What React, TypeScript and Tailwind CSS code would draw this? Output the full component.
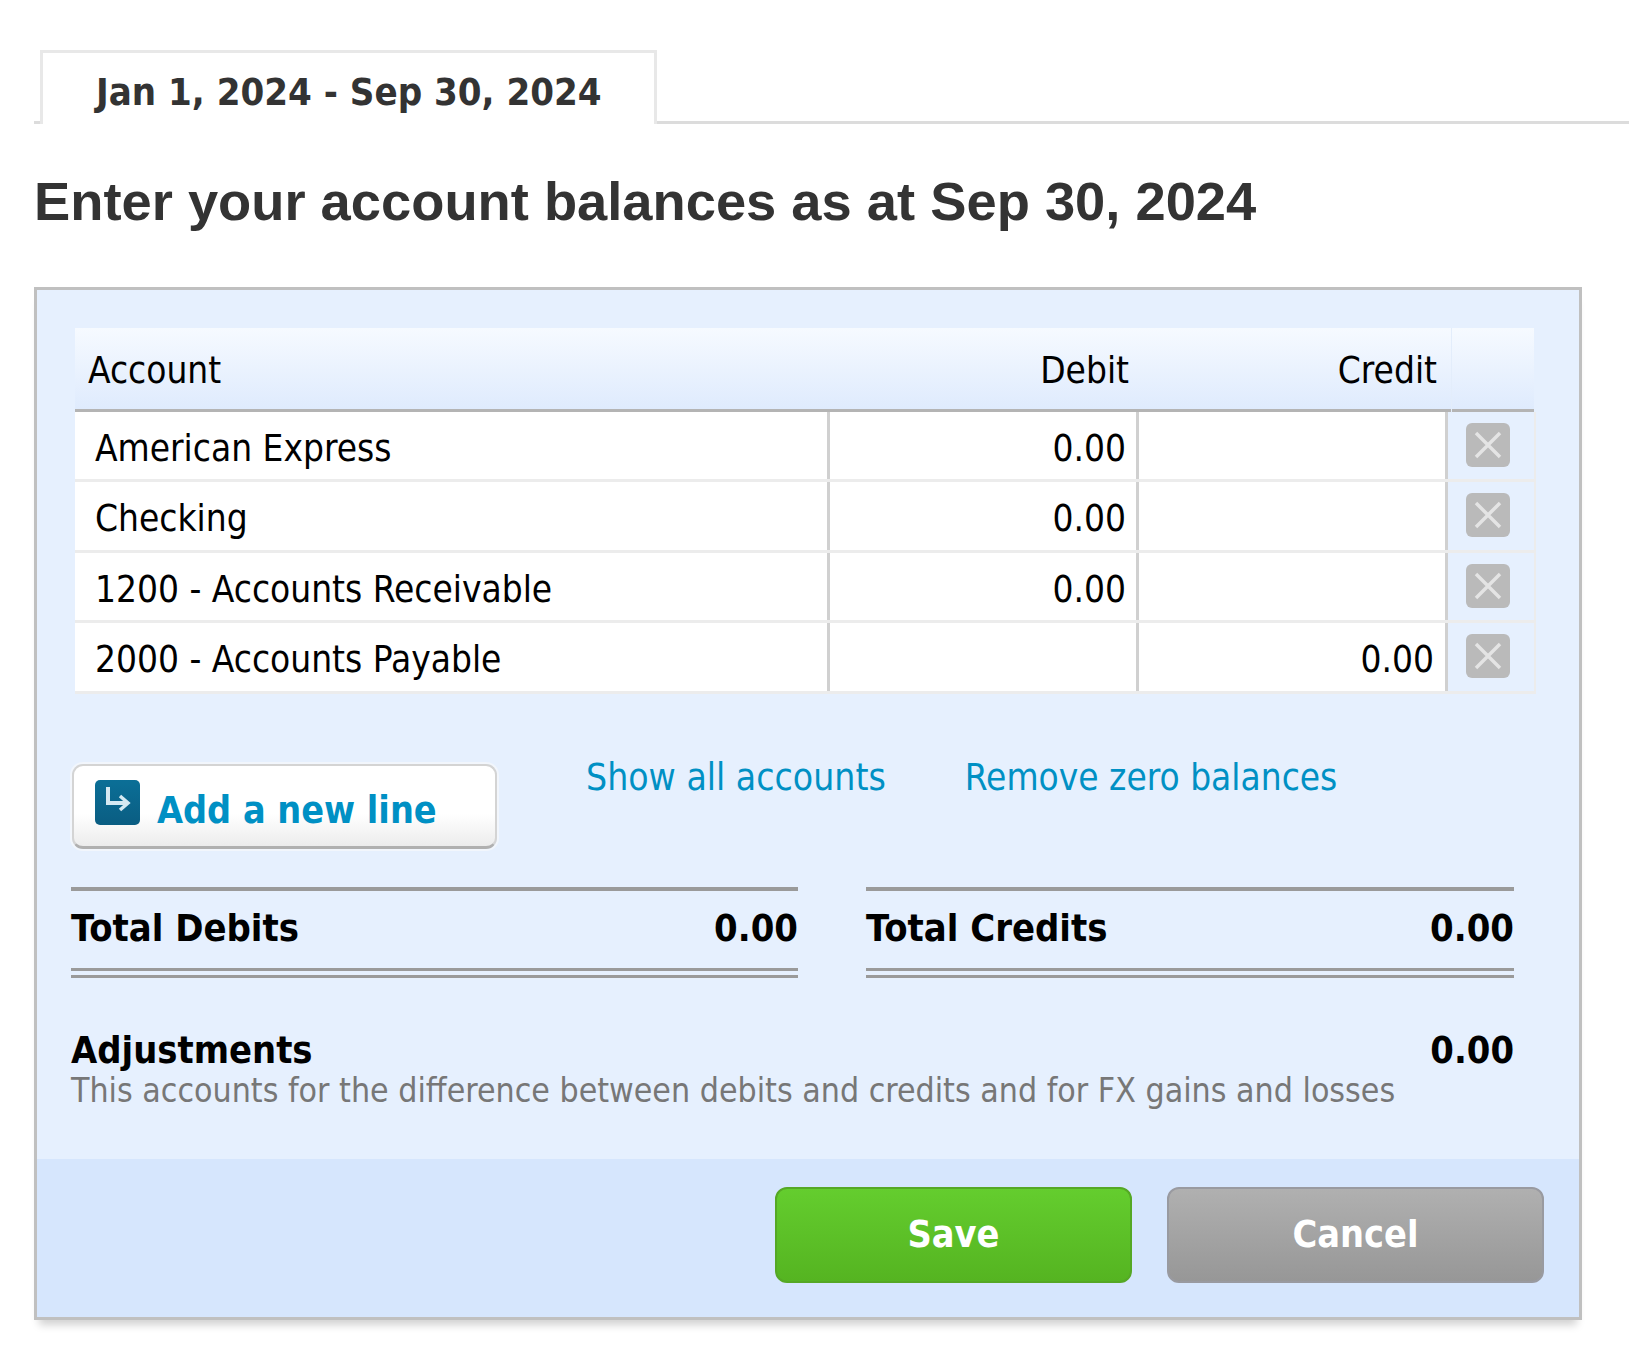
const rows = [
  { name: "American Express", debit: "0.00", credit: "" },
  { name: "Checking", debit: "0.00", credit: "" },
  { name: "1200 - Accounts Receivable", debit: "0.00", credit: "" },
  { name: "2000 - Accounts Payable", debit: "", credit: "0.00" },
];

function DeleteButton() {
  return (
    <div className="w-[44px] h-[44px] rounded-[6px] bg-[#bababa] flex items-center justify-center">
      <svg width="28" height="28" viewBox="0 0 28 28" fill="none">
        <path d="M2 2L26 26M26 2L2 26" stroke="#e4e4e4" strokeWidth="3.5" />
      </svg>
    </div>
  );
}

function AddIcon() {
  return (
    <div className="w-[45px] h-[45px] rounded-[5px] bg-gradient-to-b from-[#0b6f97] to-[#0a5d82] shrink-0">
      <svg width="45" height="45" viewBox="0 0 45 45" fill="none">
        <path d="M13 7V23H31" stroke="#d5e9f2" strokeWidth="4" />
        <path d="M25 16L33 23L25 30" stroke="#d5e9f2" strokeWidth="3.5" />
      </svg>
    </div>
  );
}

export default function App() {
  return (
    <div className="w-[1629px] h-[1367px] bg-white pt-[50px] font-['DejaVu_Sans_Condensed','DejaVu_Sans',sans-serif] text-[36.7px] text-black">
      <div className="flex items-end pl-[34px]">
        <div className="w-[6px] h-[3px] bg-[#dcdcdc]"></div>
        <div className="w-[617px] h-[74px] border-[3px] border-b-0 border-[#e8e8e8] pl-[53px] pt-[3px] leading-[72px] font-bold text-[38px] text-[#333333]">
          Jan 1, 2024 - Sep 30, 2024
        </div>
        <div className="flex-1 h-[3px] bg-[#dcdcdc]"></div>
      </div>

      <h1 className="h-[163px] pt-[48px] pl-[34px] font-['Liberation_Sans',sans-serif] font-bold text-[54.3px] leading-[60px] text-[#333333]">
        Enter your account balances as at Sep 30, 2024
      </h1>

      <div className="ml-[34px] w-[1548px] h-[1033px] border-[3px] border-[#c0c0c0] bg-[#e6f0fe] flex flex-col shadow-[0_10px_8px_-5px_rgba(0,0,0,0.18)]">
        <div className="pt-[38px] pl-[38px]">
          <div className="w-[1459px] h-[84px] grid grid-cols-[755px_309px_312px_83px] border-b-[3px] border-[#b4b4b4] bg-gradient-to-b from-[#f6faff] to-[#dfebfd] leading-[85px]">
            <div className="pl-[13px]">Account</div>
            <div className="text-right pr-[10px]">Debit</div>
            <div className="text-right pr-[14px]">Credit</div>
            <div className="border-l border-[#e3edfb]"></div>
          </div>
          {rows.map((r) => (
            <div
              key={r.name}
              className="w-[1461px] h-[70.4px] grid grid-cols-[755px_309px_309px_88px] border-b-[3px] border-[#ececec] leading-[61px]"
            >
              <div className="bg-white border-r-[3px] border-[#d0d0d0] pl-[20px] pt-[6px]">{r.name}</div>
              <div className="bg-white border-r-[3px] border-[#d0d0d0] text-right pr-[10px] pt-[6px]">{r.debit}</div>
              <div className="bg-white border-r-[3px] border-[#d0d0d0] text-right pr-[11px] pt-[6px]">{r.credit}</div>
              <div className="border-r-[2px] border-[#ececec] pl-[18px] pt-[11px]">
                <DeleteButton />
              </div>
            </div>
          ))}
        </div>

        <div className="pl-[35px] mt-[70px] flex items-start">
          <div className="w-[425px] h-[85px] rounded-[11px] border-2 border-[#d4d4d4] border-b-[3px] border-b-[#b0b0b0] bg-gradient-to-b from-white from-60% to-[#ececec] flex items-start pl-[21px] pt-[14px] shadow-[0_0_0_2px_#f2f6fc]">
            <AddIcon />
            <span className="ml-[17px] mt-[8px] font-bold text-[37.4px] text-[#0090c4] leading-[44px]">Add a new line</span>
          </div>
          <a className="ml-[89px] text-[37px] leading-[28px] text-[#0090c4]">Show all accounts</a>
          <a className="ml-[79px] leading-[28px] text-[#0090c4]">Remove zero balances</a>
        </div>

        <div className="pl-[34px] mt-[38px] flex gap-[68px] font-bold text-[37.8px]">
          <div className="w-[727px] h-[91px] border-t-4 border-b-[10px] [border-top-style:solid] [border-bottom-style:double] border-[#9a9a9a] flex items-center justify-between pb-[2px]">
            <span>Total Debits</span>
            <span>0.00</span>
          </div>
          <div className="w-[648px] h-[91px] border-t-4 border-b-[10px] [border-top-style:solid] [border-bottom-style:double] border-[#9a9a9a] flex items-center justify-between pb-[2px]">
            <span>Total Credits</span>
            <span>0.00</span>
          </div>
        </div>

        <div className="pl-[34px] mt-[52px] w-[1477px]">
          <div className="flex justify-between font-bold text-[37.7px] leading-[40px]">
            <span>Adjustments</span>
            <span>0.00</span>
          </div>
          <div className="text-[33.6px] leading-[42px] text-[#777777]">
            This accounts for the difference between debits and credits and for FX gains and losses
          </div>
        </div>

        <div className="mt-auto h-[158px] bg-[#d6e6fd] pt-[28px] pr-[35px] flex justify-end gap-[35px] font-bold text-[37.5px] text-white">
          <button className="w-[357px] h-[96px] rounded-[12px] border-2 border-[#55a825] bg-gradient-to-b from-[#64cd2e] to-[#55b421] pb-[2px]">
            Save
          </button>
          <button className="w-[377px] h-[96px] rounded-[12px] border-2 border-[#999aa0] bg-gradient-to-b from-[#b0b0b0] to-[#979797] pb-[2px]">
            Cancel
          </button>
        </div>
      </div>
    </div>
  );
}
